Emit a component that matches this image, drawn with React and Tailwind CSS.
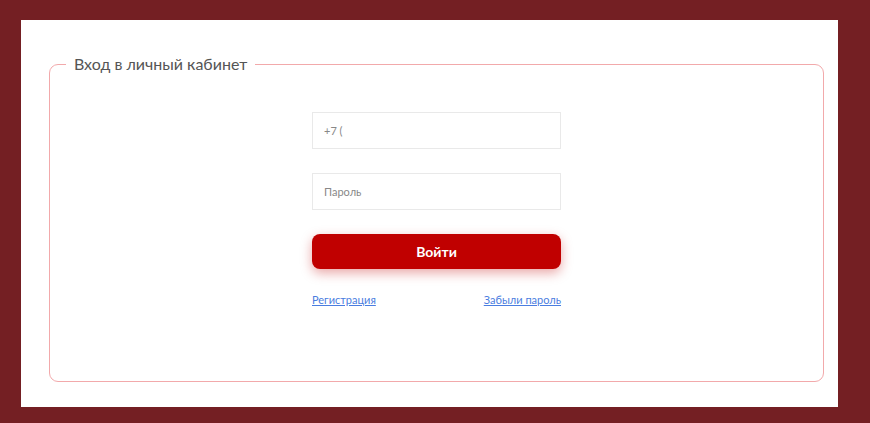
export default function App() {
  return (
    <div className="h-[423px] w-[870px] bg-[#741f23] pt-[20px] pl-[21px] font-['Lato',sans-serif]">
      <div className="h-[387px] w-[817px] bg-white pt-[33px] pl-[28px]">
        <fieldset className="h-[329px] w-[775px] rounded-[9px] border border-[#f2a9ab] px-[16px]">
          <legend className="px-[8px] text-[16px] leading-[22px] text-[#555555]">
            Вход в личный кабинет
          </legend>
          <div className="mx-auto mt-[37px] flex w-[249px] flex-col">
            <input
              className="h-[37px] w-full border border-[#e9e9e9] px-[11px] text-[11px] text-[#666] outline-none placeholder:text-[#888]"
              placeholder="+7 ("
            />
            <input
              type="password"
              className="mt-[24px] h-[37px] w-full border border-[#e9e9e9] px-[11px] text-[11px] text-[#666] outline-none placeholder:text-[#888]"
              placeholder="Пароль"
            />
            <button className="mt-[24px] h-[35px] w-full rounded-[8px] bg-[#c00000] text-[14px] font-bold text-white shadow-[0_4px_12px_rgba(192,0,0,0.35)]">
              Войти
            </button>
            <div className="mt-[23px] flex justify-between text-[11px] text-[#4a7de0]">
              <a href="#" className="underline">Регистрация</a>
              <a href="#" className="underline">Забыли пароль</a>
            </div>
          </div>
        </fieldset>
      </div>
    </div>
  );
}
